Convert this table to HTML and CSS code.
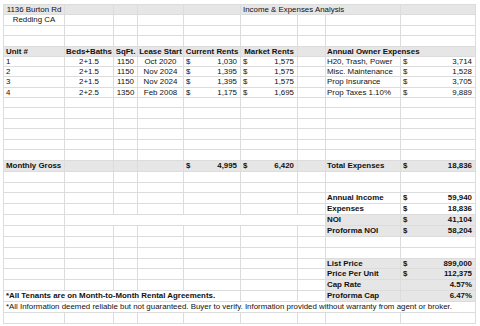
FILE: index.html
```html
<!DOCTYPE html>
<html>
<head>
<meta charset="utf-8">
<link rel="stylesheet" href="styles.css">
</head>
<body>
<div class="sheet">
  <!-- row 0 -->
  <div class="c g ctr">1136 Burton Rd</div><div class="c g"></div><div class="c g"></div><div class="c g"></div><div class="c g"></div>
  <div class="c g s6-8">Income &amp; Expenses Analysis</div><div class="c g"></div>
  <!-- row 1 -->
  <div class="c ctr">Redding CA</div><div class="c"></div><div class="c"></div><div class="c"></div><div class="c"></div><div class="c"></div><div class="c"></div><div class="c"></div><div class="c"></div>
  <!-- row 2 -->
  <div class="c"></div><div class="c"></div><div class="c"></div><div class="c"></div><div class="c"></div><div class="c"></div><div class="c"></div><div class="c"></div><div class="c"></div>
  <!-- row 3 -->
  <div class="c"></div><div class="c"></div><div class="c"></div><div class="c"></div><div class="c"></div><div class="c"></div><div class="c"></div><div class="c"></div><div class="c"></div>
  <!-- row 4 header -->
  <div class="c g b">Unit #</div><div class="c g b ctr">Beds+Baths</div><div class="c g b ctr">SqFt.</div><div class="c g b ctr">Lease Start</div><div class="c g b ctr">Current Rents</div><div class="c g b ctr">Market Rents</div><div class="c g"></div><div class="c g b s8-9 lab">Annual Owner Expenses</div>
  <!-- row 5 -->
  <div class="c">1</div><div class="c ctr">2+1.5</div><div class="c ctr">1150</div><div class="c ctr">Oct 2020</div><div class="c acc"><span>$</span><span>1,030</span></div><div class="c acc"><span>$</span><span>1,575</span></div><div class="c"></div><div class="c lab">H20, Trash, Power</div><div class="c acc"><span>$</span><span>3,714</span></div>
  <!-- row 6 -->
  <div class="c">2</div><div class="c ctr">2+1.5</div><div class="c ctr">1150</div><div class="c ctr">Nov 2024</div><div class="c acc"><span>$</span><span>1,395</span></div><div class="c acc"><span>$</span><span>1,575</span></div><div class="c"></div><div class="c lab">Misc. Maintenance</div><div class="c acc"><span>$</span><span>1,528</span></div>
  <!-- row 7 -->
  <div class="c">3</div><div class="c ctr">2+1.5</div><div class="c ctr">1150</div><div class="c ctr">Nov 2024</div><div class="c acc"><span>$</span><span>1,395</span></div><div class="c acc"><span>$</span><span>1,575</span></div><div class="c"></div><div class="c lab">Prop Insurance</div><div class="c acc"><span>$</span><span>3,705</span></div>
  <!-- row 8 -->
  <div class="c">4</div><div class="c ctr">2+2.5</div><div class="c ctr">1350</div><div class="c ctr">Feb 2008</div><div class="c acc"><span>$</span><span>1,175</span></div><div class="c acc"><span>$</span><span>1,695</span></div><div class="c"></div><div class="c lab">Prop Taxes 1.10%</div><div class="c acc"><span>$</span><span>9,889</span></div>
  <!-- rows 9-14 -->
  <div class="c"></div><div class="c"></div><div class="c"></div><div class="c"></div><div class="c"></div><div class="c"></div><div class="c"></div><div class="c"></div><div class="c"></div>
  <div class="c"></div><div class="c"></div><div class="c"></div><div class="c"></div><div class="c"></div><div class="c"></div><div class="c"></div><div class="c"></div><div class="c"></div>
  <div class="c"></div><div class="c"></div><div class="c"></div><div class="c"></div><div class="c"></div><div class="c"></div><div class="c"></div><div class="c"></div><div class="c"></div>
  <div class="c"></div><div class="c"></div><div class="c"></div><div class="c"></div><div class="c"></div><div class="c"></div><div class="c"></div><div class="c"></div><div class="c"></div>
  <div class="c"></div><div class="c"></div><div class="c"></div><div class="c"></div><div class="c"></div><div class="c"></div><div class="c"></div><div class="c"></div><div class="c"></div>
  <div class="c"></div><div class="c"></div><div class="c"></div><div class="c"></div><div class="c"></div><div class="c"></div><div class="c"></div><div class="c"></div><div class="c"></div>
  <!-- row 15 -->
  <div class="c g b">Monthly Gross</div><div class="c g"></div><div class="c g"></div><div class="c g"></div><div class="c g b acc"><span>$</span><span>4,995</span></div><div class="c g b acc"><span>$</span><span>6,420</span></div><div class="c g"></div><div class="c g b lab">Total Expenses</div><div class="c g b acc"><span>$</span><span>18,836</span></div>
  <!-- rows 16-17 -->
  <div class="c"></div><div class="c"></div><div class="c"></div><div class="c"></div><div class="c"></div><div class="c"></div><div class="c"></div><div class="c"></div><div class="c"></div>
  <div class="c"></div><div class="c"></div><div class="c"></div><div class="c"></div><div class="c"></div><div class="c"></div><div class="c"></div><div class="c"></div><div class="c"></div>
  <!-- row 18 -->
  <div class="c"></div><div class="c"></div><div class="c"></div><div class="c"></div><div class="c"></div><div class="c"></div><div class="c"></div><div class="c b lab">Annual Income</div><div class="c b acc"><span>$</span><span>59,940</span></div>
  <!-- row 19 -->
  <div class="c"></div><div class="c"></div><div class="c"></div><div class="c"></div><div class="c"></div><div class="c"></div><div class="c"></div><div class="c b lab">Expenses</div><div class="c b acc"><span>$</span><span>18,836</span></div>
  <!-- row 20 -->
  <div class="c"></div><div class="c s2-7"></div><div class="c g b lab">NOI</div><div class="c g b acc"><span>$</span><span>41,104</span></div>
  <!-- row 21 -->
  <div class="c"></div><div class="c"></div><div class="c"></div><div class="c"></div><div class="c"></div><div class="c"></div><div class="c"></div><div class="c g b lab">Proforma NOI</div><div class="c g b acc"><span>$</span><span>58,204</span></div>
  <!-- rows 22-23 -->
  <div class="c"></div><div class="c"></div><div class="c"></div><div class="c"></div><div class="c"></div><div class="c"></div><div class="c"></div><div class="c"></div><div class="c"></div>
  <div class="c"></div><div class="c"></div><div class="c"></div><div class="c"></div><div class="c"></div><div class="c"></div><div class="c"></div><div class="c"></div><div class="c"></div>
  <!-- row 24 -->
  <div class="c"></div><div class="c"></div><div class="c"></div><div class="c"></div><div class="c"></div><div class="c"></div><div class="c"></div><div class="c g b lab">List Price</div><div class="c g b acc"><span>$</span><span>899,000</span></div>
  <!-- row 25 -->
  <div class="c"></div><div class="c"></div><div class="c"></div><div class="c"></div><div class="c"></div><div class="c"></div><div class="c"></div><div class="c g b lab">Price Per Unit</div><div class="c g b acc"><span>$</span><span>112,375</span></div>
  <!-- row 26 -->
  <div class="c"></div><div class="c"></div><div class="c"></div><div class="c"></div><div class="c"></div><div class="c"></div><div class="c"></div><div class="c g b lab">Cap Rate</div><div class="c g b r">4.57%</div>
  <!-- row 27 -->
  <div class="c b s1-5">*All Tenants are on Month-to-Month Rental Agreements.</div><div class="c"></div><div class="c"></div><div class="c g b lab">Proforma Cap</div><div class="c g b r">6.47%</div>
  <!-- row 28 -->
  <div class="c s1-9">*All Information deemed reliable but not guaranteed. Buyer to verify. Information provided without warranty from agent or broker.</div>
  <!-- row 29 -->
  <div class="c"></div><div class="c"></div><div class="c"></div><div class="c"></div><div class="c"></div><div class="c"></div><div class="c"></div><div class="c"></div><div class="c"></div>
</div>
</body>
</html>
```

FILE: styles.css
```css
html, body {
  margin: 0;
  padding: 0;
  background: #ffffff;
}

.sheet {
  margin: 4px 0 0 3px;
  display: grid;
  grid-template-columns: 60px 48px 23px 45px 56px 56px 27px 74px 74px;
  grid-template-rows:
    9px 10px 9px 10px 9px 9px 9px 10px 9px 9px 10px 9px 10px 9px 10px
    10px 10px 9px 10px 10px 10px 10px 10px 10px 9px 10px 10px 10px 10px 10px;
  gap: 1px;
  padding: 1px;
  width: max-content;
  background: #dcdcdc;
  font-family: "Liberation Sans", Arial, sans-serif;
  font-size: 7.9px;
  color: #111111;
}

.c {
  background: #ffffff;
  display: flex;
  align-items: center;
  padding: 0 3px 0 2px;
  white-space: nowrap;
  line-height: 1;
  min-width: 0;
}

.g { background: #e6e6e6; }
.b { font-weight: bold; }
.ctr { justify-content: center; padding: 0; }
.acc { justify-content: space-between; }
.r { justify-content: flex-end; }
.lab { padding-left: 1px; }

.s6-8 { grid-column: 6 / 9; }
.s8-9 { grid-column: 8 / 10; }
.s2-7 { grid-column: 2 / 8; }
.s1-5 { grid-column: 1 / 6; }
.s1-9 { grid-column: 1 / 10; }
```
